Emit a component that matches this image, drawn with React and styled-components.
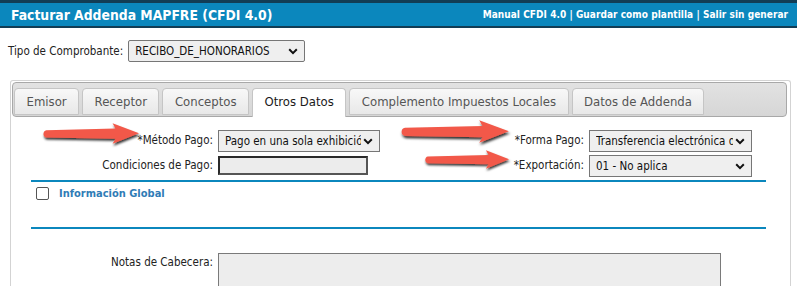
import React from "react";
import styled, { createGlobalStyle } from "styled-components";

const GlobalStyle = createGlobalStyle`
*{
  margin:0;
  padding:0;
  box-sizing:border-box;
}
body{
  background:#fff;
  font-family:"DejaVu Sans Condensed","DejaVu Sans",sans-serif;
  font-stretch:condensed;
  color:#333;
  overflow:hidden;
}`

const Header = styled.div`
height:28px;
display:flex;
align-items:center;
justify-content:space-between;
padding:0 9px 0 11px;
background:#0b87bd;
border-top:3px solid #123d55;
border-bottom:2px solid #123d55;
color:#fff;
font-weight:bold;`

const Title = styled.h1`
font-size:13.8px;
font-weight:bold;`

const Links = styled.div`
font-size:10px;
letter-spacing:0.05px;`

const TipoRow = styled.div`
display:flex;
align-items:center;
gap:5px;
margin:12px 0 18px 8px;
font-size:11.5px;
color:#222;`

const Select = styled.div`
width:${p => p.$w}px;
height:22px;
display:flex;
align-items:center;
justify-content:space-between;
padding:0 6px 0 6px;
background:#efefef;
border:1px solid #767676;
border-radius:${p => p.$round ? "2px" : "0"};
font-size:11.5px;
color:#111;
white-space:nowrap;
overflow:hidden;
span{ overflow:hidden; }
svg{ flex:none; margin-left:2px; }`

const Panel = styled.div`
margin:0 6px 0 10px;
border:1px solid #d3d3d3;
border-bottom:none;
border-radius:3px 3px 0 0;
padding:1px 3px 0 1px;
height:208px;`

const TabBar = styled.ul`
display:flex;
gap:3px;
height:35px;
padding:5px 0 0 1px;
background:linear-gradient(#e2e2e2,#d6d6d6);
border:1px solid #a8a8a8;
border-radius:4px;
list-style:none;`

const Tab = styled.li`
height:${p => p.$active ? "29px" : "27px"};
padding:5px 11.5px 0;
font-size:13px;
color:${p => p.$active ? "#1a1a1a" : "#555"};
background:${p => p.$active ? "#fff" : "linear-gradient(#f8f8f8,#e8e8e8)"};
border:1px solid #c5c5c5;
border-bottom:${p => p.$active ? "none" : "1px solid #c5c5c5"};
border-radius:4px 4px 0 0;
white-space:nowrap;`

const Pane = styled.div`
position:relative;
padding-top:13px;`

const FormGrid = styled.div`
display:grid;
grid-template-columns:200px 162px 199px 163px;
column-gap:5px;
row-gap:3px;
padding-left:1px;`

const Label = styled.label`
text-align:right;
font-size:11.5px;
color:#222;
padding-top:${p => p.$top ?? 3}px;
white-space:nowrap;`

const TextInput = styled.div`
width:150px;
height:19px;
margin-top:1px;
background:#ececec;
border:2px solid #2a2a2a;
border-right-color:#555;
border-bottom-color:#555;`

const Rule = styled.hr`
border:none;
height:2px;
background:#0b87bd;
margin:${p => p.$top}px 21px 0 19px;`

const CheckRow = styled.div`
display:flex;
align-items:center;
gap:10px;
margin-top:4px;
padding-left:24px;
height:14px;`

const Box = styled.span`
width:13px;
height:13px;
border:1px solid #555;
border-radius:2px;
background:#fff;`

const Legend = styled.span`
color:#2f7cb6;
font-weight:bold;
font-size:11px;`

const NotesRow = styled.div`
display:grid;
grid-template-columns:200px 503px;
column-gap:5px;
padding-left:1px;
margin-top:24px;`

const TextArea = styled.div`
height:60px;
background:#ededed;
border:1px solid #7a7a7a;`

const ArrowWrap = styled.svg`
position:absolute;
left:${p => p.$x}px;
top:${p => p.$y}px;
overflow:visible;`

function Chevron() {
  return (
    <svg width="10" height="7" viewBox="0 0 10 7">
      <path d="M1.2 1.3 L5 5.1 L8.8 1.3" fill="none" stroke="#111" strokeWidth="2" />
    </svg>
  );
}

function Arrow({ x, y, w, h }) {
  return (
    <ArrowWrap $x={x} $y={y} width={w} height={h} viewBox="0 0 100 24" preserveAspectRatio="none">
      <defs>
        <filter id={`sh${x}`} x="-10%" y="-30%" width="130%" height="180%">
          <feDropShadow dx="0.8" dy="2.4" stdDeviation="1.3" floodColor="#000" floodOpacity="0.8" />
        </filter>
      </defs>
      <path
        d="M4.5 8.2 C0.5 8.6 0.5 16.2 4.5 16.6 L75 18 L72 23.8 L99 11.8 L72 0.2 L75 6.2 Z"
        fill="#f25949"
        filter={`url(#sh${x})`}
      />
    </ArrowWrap>
  );
}

export default function App() {
  const tabs = ["Emisor", "Receptor", "Conceptos", "Otros Datos", "Complemento Impuestos Locales", "Datos de Addenda"];
  return (
    <>
      <GlobalStyle />
      <Header>
        <Title>Facturar Addenda MAPFRE (CFDI 4.0)</Title>
        <Links>Manual CFDI 4.0 | Guardar como plantilla | Salir sin generar</Links>
      </Header>
      <TipoRow>
        Tipo de Comprobante:
        <Select $w={177} $round>
          <span>RECIBO_DE_HONORARIOS</span>
          <Chevron />
        </Select>
      </TipoRow>
      <Panel>
        <TabBar>
          {tabs.map(t => (
            <Tab key={t} $active={t === "Otros Datos"}>{t}</Tab>
          ))}
        </TabBar>
        <Pane>
          <FormGrid>
            <Label>*Método Pago:</Label>
            <Select $w={162}>
              <span>Pago en una sola exhibición</span>
              <Chevron />
            </Select>
            <Label>*Forma Pago:</Label>
            <Select $w={163}>
              <span>Transferencia electrónica de fondos</span>
              <Chevron />
            </Select>
            <Label>Condiciones de Pago:</Label>
            <TextInput />
            <Label>*Exportación:</Label>
            <Select $w={163}>
              <span>01 - No aplica</span>
              <Chevron />
            </Select>
          </FormGrid>
          <Rule $top={3} />
          <CheckRow>
            <Box />
            <Legend>Información Global</Legend>
          </CheckRow>
          <Rule $top={27} />
          <NotesRow>
            <Label $top={2}>Notas de Cabecera:</Label>
            <TextArea />
          </NotesRow>
          <Arrow x={30} y={6} w={98} h={21} />
          <Arrow x={388} y={3} w={110} h={23} />
          <Arrow x={412} y={33} w={86} h={19} />
        </Pane>
      </Panel>
    </>
  );
}
